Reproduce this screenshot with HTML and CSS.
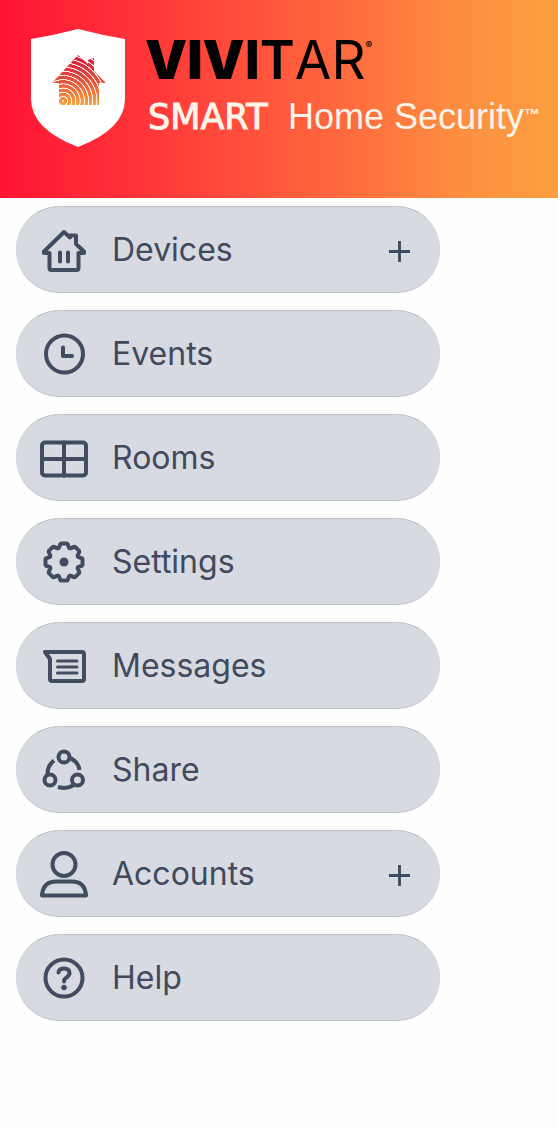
FILE: index.html
```html
<!DOCTYPE html>
<html lang="en">
<head>
    <meta charset="UTF-8">
    <meta name="viewport" content="width=device-width, initial-scale=1.0">
    <title>Vivitar Smart Home Security</title>
    <link rel="stylesheet" href="styles.css">
</head>
<body>
    <header class="header">
        <svg class="shield" viewBox="0 0 96 118" aria-hidden="true">
            <defs>
                <linearGradient id="house-color" x1="0" y1="0" x2="0" y2="1">
                    <stop offset="0" stop-color="#d3183c"/>
                    <stop offset="0.45" stop-color="#e2483a"/>
                    <stop offset="1" stop-color="#f6a63c"/>
                </linearGradient>
                <radialGradient id="rings" gradientUnits="userSpaceOnUse" cx="33" cy="72" r="4.200" spreadMethod="repeat">
                    <stop offset="0" stop-color="#fff"/>
                    <stop offset="0.15" stop-color="#fff" stop-opacity="0.9"/>
                    <stop offset="0.25" stop-color="#fff" stop-opacity="0"/>
                    <stop offset="0.9" stop-color="#fff" stop-opacity="0"/>
                    <stop offset="1" stop-color="#fff" stop-opacity="0.9"/>
                </radialGradient>
            </defs>
            <path d="M48 0Q71 6 95 10V70Q95 100 48 118Q1 100 1 70V10Q25 6 48 0Z" fill="#fff"/>
            <path d="M48 26L58 35V31L64 29V42L76 54H69V76H29V54H22Z" fill="url(#house-color)"/>
            <path d="M48 26L58 35V31L64 29V42L76 54H69V76H29V54H22Z" fill="url(#rings)"/>
        </svg>
        <div class="brand">
            <h1 class="brand-name"><span class="black">VIV</span><span class="bold">I</span><span class="semi">T</span><span class="medium">AR</span><sup>®</sup></h1>
            <p class="tagline"><span class="smart">SMART</span><span>Home Security</span><sup>™</sup></p>
        </div>
    </header>

    <nav>
        <ul class="menu">
            <li>
                <button type="button" class="menu-item" aria-expanded="false">
                    <svg class="icon" viewBox="0 0 48 48" aria-hidden="true">
                        <path d="M24 6L4 25.500V27H9.500V42Q9.500 44 11.500 44H36.500Q38.500 44 38.500 42V27H44V25.500L36 18V9.500H30V11.500Z"/>
                        <path d="M20 26.500V35.500M28 26.500V35.500"/>
                    </svg>
                    <span class="label">Devices</span>
                    <svg class="plus" viewBox="0 0 22 22" aria-hidden="true"><path d="M11 0V22M0 11H22"/></svg>
                </button>
            </li>
            <li>
                <a href="#events" class="menu-item">
                    <svg class="icon" viewBox="0 0 48 48" aria-hidden="true">
                        <circle cx="24.500" cy="24" r="18.500"/>
                        <path d="M23 17.500V26H32"/>
                    </svg>
                    <span class="label">Events</span>
                </a>
            </li>
            <li>
                <a href="#rooms" class="menu-item">
                    <svg class="icon" viewBox="0 0 48 48" aria-hidden="true">
                        <rect x="2" y="8.500" width="44" height="33" rx="3"/>
                        <path d="M24 8.500V41.500M2 25H46"/>
                    </svg>
                    <span class="label">Rooms</span>
                </a>
            </li>
            <li>
                <a href="#settings" class="menu-item">
                    <svg class="icon" viewBox="-24 -24 48 48" aria-hidden="true">
                        <path id="tooth" d="M-5.700 -13.800C-3.500 -14.500 -5 -18.500 -2.500 -18.500H2.500C5 -18.500 3.500 -14.500 5.700 -13.800"/>
                        <use href="#tooth" transform="rotate(45)"/>
                        <use href="#tooth" transform="rotate(90)"/>
                        <use href="#tooth" transform="rotate(135)"/>
                        <use href="#tooth" transform="rotate(180)"/>
                        <use href="#tooth" transform="rotate(225)"/>
                        <use href="#tooth" transform="rotate(270)"/>
                        <use href="#tooth" transform="rotate(315)"/>
                        <circle cx="0" cy="0" r="4.500" class="solid"/>
                    </svg>
                    <span class="label">Settings</span>
                </a>
            </li>
            <li>
                <a href="#messages" class="menu-item">
                    <svg class="icon" viewBox="0 0 48 48" aria-hidden="true">
                        <path d="M5 10H42Q44 10 44 12V37Q44 39 42 39H12Q10 39 10 37V17Z"/>
                        <path d="M17.500 19H37M17.500 25H37M17.500 31H37" class="thin"/>
                    </svg>
                    <span class="label">Messages</span>
                </a>
            </li>
            <li>
                <a href="#share" class="menu-item">
                    <svg class="icon" viewBox="0 0 48 48" aria-hidden="true">
                        <circle cx="24" cy="11" r="5.500"/>
                        <circle cx="10" cy="34" r="5.500"/>
                        <circle cx="37.500" cy="34" r="5.500"/>
                        <path class="flat" d="M29.500 12Q38 15 39.500 24M14 14.500Q7 20 7.500 29M18 41Q27 43.500 34 39"/>
                    </svg>
                    <span class="label">Share</span>
                </a>
            </li>
            <li>
                <button type="button" class="menu-item" aria-expanded="false">
                    <svg class="icon" viewBox="0 0 48 48" aria-hidden="true">
                        <circle cx="24" cy="14.500" r="11.500"/>
                        <path d="M2 45.500Q3 31.500 16 31.500H32Q45 31.500 46 45.500Z"/>
                    </svg>
                    <span class="label">Accounts</span>
                    <svg class="plus" viewBox="0 0 22 22" aria-hidden="true"><path d="M11 0V22M0 11H22"/></svg>
                </button>
            </li>
            <li>
                <a href="#help" class="menu-item">
                    <svg class="icon" viewBox="0 0 48 48" aria-hidden="true">
                        <circle cx="24" cy="24" r="18.500"/>
                        <path d="M18.500 18.500Q19 14.500 24 14.500Q29.500 14.500 29.500 19Q29.500 21.500 26.500 23.500Q24 25 24 27.500"/>
                        <circle cx="24" cy="33.500" r="2.800" class="solid"/>
                    </svg>
                    <span class="label">Help</span>
                </a>
            </li>
        </ul>
    </nav>
</body>
</html>
```
FILE: styles.css
```css
* {
    box-sizing: border-box;
}

body {
    margin: 0;
    font-family: Inter, "Liberation Sans", sans-serif;
    background: #fefefe;
    color: #414a5c;
}

.header {
    display: flex;
    align-items: flex-start;
    gap: 19px;
    min-height: 198px;
    padding: 29px 16px 24px 30px;
    background: linear-gradient(90deg, #ff1533 0%, #ff3038 22%, #ff6a3e 62%, #fd8e40 82%, #fb9f40 100%);
}

.shield {
    flex: none;
    width: 96px;
    height: 118px;
}

.brand {
    white-space: nowrap;
}

.brand-name {
    display: flex;
    margin: 0;
    padding-top: 4px;
    font-size: 53px;
    line-height: 54px;
    color: #000;
}

.brand-name sup {
    font-size: 10px;
    line-height: 24px;
    font-weight: 600;
}

.black {
    font-weight: 900;
}

.bold {
    font-weight: 800;
}

.semi {
    font-weight: 600;
}

.medium {
    font-weight: 400;
}

.tagline {
    display: flex;
    align-items: baseline;
    margin: 0;
    padding: 10px 0 0 3px;
    font-family: "Liberation Sans", Arial, sans-serif;
    font-size: 36px;
    line-height: 40px;
    color: #fff4ea;
}

.tagline sup {
    align-self: flex-start;
    font-size: 16px;
    font-weight: bold;
    line-height: 36px;
}

.smart {
    min-width: 140px;
    font-family: "DejaVu Sans", sans-serif;
    font-size: 35px;
    -webkit-text-stroke: 1px #fff4ea;
}

.menu {
    display: grid;
    gap: 17px;
    width: 76%;
    margin: 8px 16px;
    padding: 0;
    list-style: none;
}

.menu-item {
    display: flex;
    align-items: center;
    gap: 24px;
    width: 100%;
    height: 87px;
    padding: 0 30px 0 24px;
    border: 0 solid #bcc0c6;
    border-width: 1px 0;
    border-radius: 44px;
    background: #d7dae1;
    color: inherit;
    font-family: inherit;
    font-size: 32px;
    line-height: 40px;
    text-align: left;
    text-decoration: none;
    cursor: pointer;
}

.menu-item:hover {
    background: #cdd1da;
}

.label {
    flex: 1;
}

.icon,
.plus {
    flex: none;
    fill: none;
    stroke: #414c60;
    stroke-width: 4;
    stroke-linecap: round;
    stroke-linejoin: round;
}

.icon {
    width: 48px;
    height: 48px;
}

.plus {
    width: 21px;
    height: 21px;
    margin-top: 4px;
    stroke-width: 3;
    stroke-linecap: butt;
}

.icon .flat {
    stroke-linecap: butt;
}

.icon .thin {
    stroke-width: 3;
}

.icon .solid {
    fill: #414c60;
    stroke: none;
}
```
